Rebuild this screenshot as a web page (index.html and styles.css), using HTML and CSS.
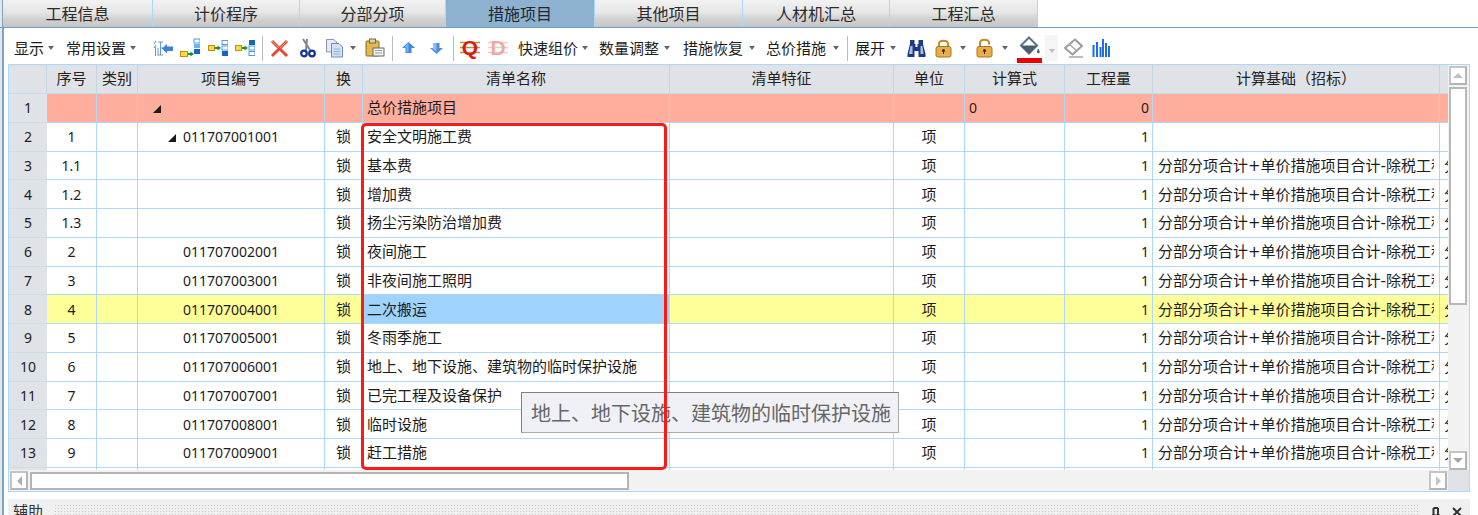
FILE: index.html
```html
<!DOCTYPE html>
<html lang="zh-CN">
<head>
    <meta charset="UTF-8">
    <title>措施项目</title>
    <link rel="stylesheet" href="styles.css">
</head>
<body>
<div class="app">
    <div class="tabs">
        <div class="tab w150">工程信息</div>
        <div class="tab w147">计价程序</div>
        <div class="tab w146">分部分项</div>
        <div class="tab w149 active">措施项目</div>
        <div class="tab w148">其他项目</div>
        <div class="tab w147">人材机汇总</div>
        <div class="tab w148">工程汇总</div>
    </div>

    <div class="toolbar">
        <span class="menu ml14">显示</span><i class="caret ml4"></i>
        <span class="menu ml12">常用设置</span><i class="caret ml4"></i>

        <!-- insert / move icons -->
        <svg class="ml17" width="20" height="20" viewBox="0 0 20 20"><path d="M3 3L1 6M3 7L1 10M2.500 9V18M5 4H10M7.500 4V17M5 10V17M4.500 17H10M8 10H10" fill="none" stroke="#5b9bd8" stroke-width="1"/><path d="M9 10.500L14 6V8.500H20V13H14V15.500Z" fill="#3f7fdc"/></svg>
        <svg class="ml7" width="20" height="20" viewBox="0 0 20 20"><rect x="14" y="1" width="6" height="4" fill="#fff" stroke="#4a9be8"/><rect x="14" y="6" width="6" height="4" fill="#6fb2f0"/><rect x="14" y="11" width="6" height="5" fill="#1566c4"/><rect x="0.500" y="13.500" width="7" height="5" fill="#f7dc45" stroke="#c98a1a"/><path d="M8 16H11" stroke="#1f8f2f" stroke-width="2"/><path d="M10.500 13.500L14 16L10.500 18.500Z" fill="#1f8f2f"/></svg>
        <svg class="ml8" width="20" height="20" viewBox="0 0 20 20"><rect x="14" y="2.500" width="6" height="4" fill="#fff" stroke="#4a9be8"/><rect x="14" y="8" width="6" height="4" fill="#fff" stroke="#4a9be8"/><rect x="14" y="13" width="6" height="5" fill="#1566c4"/><rect x="0.500" y="7.500" width="6" height="5" fill="#f7dc45" stroke="#c98a1a"/><path d="M7 10H10" stroke="#1f8f2f" stroke-width="2"/><path d="M9.500 7.500L13 10L9.500 12.500Z" fill="#1f8f2f"/></svg>
        <svg class="ml7" width="20" height="20" viewBox="0 0 20 20"><rect x="14" y="2" width="6" height="5" fill="#1566c4"/><rect x="14" y="8" width="6" height="4" fill="#fff" stroke="#4a9be8"/><rect x="14" y="13.500" width="6" height="4" fill="#fff" stroke="#4a9be8"/><rect x="0.500" y="7.500" width="6" height="5" fill="#f7dc45" stroke="#c98a1a"/><path d="M7 10H10" stroke="#1f8f2f" stroke-width="2"/><path d="M9.500 7.500L13 10L9.500 12.500Z" fill="#1f8f2f"/></svg>
        <i class="sep ml7"></i>

        <!-- delete, cut, copy, paste -->
        <svg class="ml7" width="19" height="20" viewBox="0 0 19 20"><path d="M2 3L17 18M17 3L2 18" stroke="#e8492f" stroke-width="3"/><path d="M2 3L9 10M17 3L10 10" stroke="#f49a86" stroke-width="1"/></svg>
        <svg class="ml11" width="16" height="20" viewBox="0 0 16 20"><path d="M3 1L10 12M7 1L6 12" stroke="#7d8590" stroke-width="2" fill="none"/><circle cx="4" cy="15.500" r="2.800" fill="none" stroke="#12329c" stroke-width="2.200"/><circle cx="12" cy="15.500" r="2.800" fill="none" stroke="#12329c" stroke-width="2.200"/></svg>
        <svg class="ml9" width="19" height="20" viewBox="0 0 19 20"><path d="M1.500 1.500H9L11.500 4V14H1.500Z" fill="#e8eaf4" stroke="#8c93b8"/><path d="M6.500 5.500H14L17.500 9V19H6.500Z" fill="#cfe3f7" stroke="#7c88b4"/><path d="M8.500 11H15M8.500 13.500H15M8.500 16H15" stroke="#8fb3da"/></svg>
        <i class="caret ml6"></i>
        <svg class="ml9" width="20" height="20" viewBox="0 0 20 20"><rect x="1" y="3" width="13" height="15" rx="1" fill="#e4b84a" stroke="#8e6a1e"/><rect x="4.500" y="1" width="6" height="4" fill="#d8d2b8" stroke="#7a6a3a"/><rect x="8" y="10" width="11" height="8" fill="#f4f4f4" stroke="#66686e"/><path d="M10 12.500H17M10 15H17" stroke="#9a9ca2"/></svg>
        <i class="sep ml7"></i>

        <!-- row up / down -->
        <svg class="ml9" width="13" height="20" viewBox="0 0 13 20"><path d="M6.500 4L13 10H9.500V15H3.500V10H0Z" fill="#3a86e0"/><path d="M6.500 5L2 9.500H4.500V14H6.500Z" fill="#7cb6f2"/></svg>
        <svg class="ml15" width="13" height="20" viewBox="0 0 13 20"><path d="M6.500 16L0 10H3.500V5H9.500V10H13Z" fill="#4a8ee0"/><path d="M3.500 5H6.500V14L2 10H4Z" fill="#8cbcf0"/></svg>
        <i class="sep ml10"></i>

        <!-- QD -->
        <svg class="ml6" width="20" height="22" viewBox="0 0 20 22"><path d="M0 5.500H20M0 10.500H20M0 15.500H20" stroke="#a8a030" stroke-width="1.500"/><text class="letter" x="10" y="18" fill="#e01818">Q</text></svg>
        <svg class="ml8 faded" width="20" height="22" viewBox="0 0 20 22"><path d="M0 5.500H20M0 10.500H20M0 15.500H20" stroke="#a8a030" stroke-width="1.500"/><text class="letter" x="10" y="18" fill="#e01818">D</text></svg>

        <span class="menu ml10">快速组价</span><i class="caret ml4"></i>
        <span class="menu ml11">数量调整</span><i class="caret ml5"></i>
        <span class="menu ml13">措施恢复</span><i class="caret ml6"></i>
        <span class="menu ml11">总价措施</span><i class="caret ml7"></i>
        <i class="sep ml8"></i>
        <span class="menu ml7">展开</span><i class="caret ml5"></i>

        <!-- find -->
        <svg class="ml11" width="19" height="20" viewBox="0 0 19 20"><path d="M3 2H7.500V6H8.500V9H10.500V6H11.500V2H16V6L18.500 16V19H11.500V13H7.500V19H0.500V16L3 6Z" fill="#1d3a86"/><path d="M3.500 8L2 16H5.500V8ZM13.500 8V16H16.500L15.500 8Z" fill="#a8c0ee"/></svg>

        <!-- locks -->
        <svg class="ml9" width="17" height="20" viewBox="0 0 17 20"><path d="M4 9V6C4 1.500 13 1.500 13 6V9" fill="none" stroke="#c58a22" stroke-width="2"/><rect x="1" y="8.500" width="15" height="10.500" rx="2" fill="#e9ad4a" stroke="#a87420"/><circle cx="8.500" cy="12.500" r="1.500" fill="#40280c"/><path d="M8 13H9V16H8Z" fill="#40280c"/></svg>
        <i class="caret ml8"></i>
        <svg class="ml10" width="17" height="20" viewBox="0 0 17 20"><path d="M4 9V5C4 0.500 13 0.500 13 5V6.500" fill="none" stroke="#c58a22" stroke-width="2"/><rect x="1" y="8.500" width="15" height="10.500" rx="2" fill="#e9ad4a" stroke="#a87420"/><circle cx="8.500" cy="12.500" r="1.500" fill="#40280c"/><path d="M8 13H9V16H8Z" fill="#40280c"/></svg>
        <i class="caret ml9"></i>

        <!-- fill colour -->
        <div class="fill ml9">
            <svg width="21" height="19" viewBox="0 0 21 19"><path d="M10 1.500L18 9.500L10 17.500L2 9.500Z" fill="#fff" stroke="#5f7186" stroke-width="2"/><path d="M1.500 9.500H18.500L10 18Z" fill="#4a5d74"/><path d="M19 12.500C20.800 15 21 16 20.300 17C19.300 17.900 17.800 17 18 15.500Z" fill="#4a5d74"/></svg>
            <i class="fill-bar"></i>
        </div>
        <div class="more ml3"><i class="caret light"></i></div>

        <svg class="ml5" width="20" height="20" viewBox="0 0 20 20"><path d="M12 1.500L19 8L9.500 16.500L2 10Z" fill="#fff" stroke="#9c9c9c" stroke-width="2" stroke-linejoin="round"/><path d="M6 6L13.500 12.500" stroke="#a6a6a6" stroke-width="1.500"/><path d="M6 19H20" stroke="#a6a6a6" stroke-width="1.500"/></svg>
        <svg class="ml9" width="18" height="20" viewBox="0 0 18 20"><path d="M1.500 7V19M5 4V19M8.500 9V19M11 1V19M14 5V19M17 8V19" stroke="#1a6ee6" stroke-width="2"/></svg>
    </div>

    <div class="frame">
        <div class="frame-top">
            <div class="grid-wrap">
                <table class="grid">
                    <colgroup>
                        <col class="c-no"><col class="c-seq"><col class="c-type"><col class="c-code"><col class="c-swap">
                        <col class="c-name"><col class="c-feat"><col class="c-unit"><col class="c-calc"><col class="c-qty">
                        <col class="c-base"><col class="c-more">
                    </colgroup>
                    <thead>
                        <tr>
                            <th></th><th>序号</th><th>类别</th><th>项目编号</th><th>换</th><th>清单名称</th>
                            <th>清单特征</th><th>单位</th><th>计算式</th><th>工程量</th><th>计算基础（招标）</th><th></th>
                        </tr>
                    </thead>
                    <tbody>
                        <tr class="total">
                            <td class="no">1</td><td></td><td></td><td class="lvl1"><i class="tree"></i></td><td></td>
                            <td>总价措施项目</td><td></td><td></td><td class="num">0</td><td class="num right">0</td><td></td><td></td>
                        </tr>
                        <tr>
                            <td class="no">2</td><td class="num mid">1</td><td></td><td class="lvl2 num"><i class="tree gap"></i>011707001001</td><td class="mid">锁</td>
                            <td>安全文明施工费</td><td></td><td class="mid">项</td><td></td><td class="num right">1</td><td></td><td></td>
                        </tr>
                        <tr>
                            <td class="no">3</td><td class="num mid">1.1</td><td></td><td></td><td class="mid">锁</td>
                            <td>基本费</td><td></td><td class="mid">项</td><td></td><td class="num right">1</td>
                            <td class="base"><div class="clip">分部分项合计+单价措施项目合计-除税工程</div></td><td>分部</td>
                        </tr>
                        <tr>
                            <td class="no">4</td><td class="num mid">1.2</td><td></td><td></td><td class="mid">锁</td>
                            <td>增加费</td><td></td><td class="mid">项</td><td></td><td class="num right">1</td>
                            <td class="base"><div class="clip">分部分项合计+单价措施项目合计-除税工程</div></td><td>分部</td>
                        </tr>
                        <tr>
                            <td class="no">5</td><td class="num mid">1.3</td><td></td><td></td><td class="mid">锁</td>
                            <td>扬尘污染防治增加费</td><td></td><td class="mid">项</td><td></td><td class="num right">1</td>
                            <td class="base"><div class="clip">分部分项合计+单价措施项目合计-除税工程</div></td><td>分部</td>
                        </tr>
                        <tr>
                            <td class="no">6</td><td class="num mid">2</td><td></td><td class="code num">011707002001</td><td class="mid">锁</td>
                            <td>夜间施工</td><td></td><td class="mid">项</td><td></td><td class="num right">1</td>
                            <td class="base"><div class="clip">分部分项合计+单价措施项目合计-除税工程</div></td><td>分部</td>
                        </tr>
                        <tr>
                            <td class="no">7</td><td class="num mid">3</td><td></td><td class="code num">011707003001</td><td class="mid">锁</td>
                            <td>非夜间施工照明</td><td></td><td class="mid">项</td><td></td><td class="num right">1</td>
                            <td class="base"><div class="clip">分部分项合计+单价措施项目合计-除税工程</div></td><td>分部</td>
                        </tr>
                        <tr class="current">
                            <td class="no">8</td><td class="num mid">4</td><td></td><td class="code num">011707004001</td><td class="mid">锁</td>
                            <td class="selected">二次搬运</td><td></td><td class="mid">项</td><td></td><td class="num right">1</td>
                            <td class="base"><div class="clip">分部分项合计+单价措施项目合计-除税工程</div></td><td>分部</td>
                        </tr>
                        <tr>
                            <td class="no">9</td><td class="num mid">5</td><td></td><td class="code num">011707005001</td><td class="mid">锁</td>
                            <td>冬雨季施工</td><td></td><td class="mid">项</td><td></td><td class="num right">1</td>
                            <td class="base"><div class="clip">分部分项合计+单价措施项目合计-除税工程</div></td><td>分部</td>
                        </tr>
                        <tr>
                            <td class="no">10</td><td class="num mid">6</td><td></td><td class="code num">011707006001</td><td class="mid">锁</td>
                            <td>地上、地下设施、建筑物的临时保护设施</td><td></td><td class="mid">项</td><td></td><td class="num right">1</td>
                            <td class="base"><div class="clip">分部分项合计+单价措施项目合计-除税工程</div></td><td>分部</td>
                        </tr>
                        <tr>
                            <td class="no">11</td><td class="num mid">7</td><td></td><td class="code num">011707007001</td><td class="mid">锁</td>
                            <td>已完工程及设备保护</td><td></td><td class="mid">项</td><td></td><td class="num right">1</td>
                            <td class="base"><div class="clip">分部分项合计+单价措施项目合计-除税工程</div></td><td>分部</td>
                        </tr>
                        <tr>
                            <td class="no">12</td><td class="num mid">8</td><td></td><td class="code num">011707008001</td><td class="mid">锁</td>
                            <td>临时设施</td><td></td><td class="mid">项</td><td></td><td class="num right">1</td>
                            <td class="base"><div class="clip">分部分项合计+单价措施项目合计-除税工程</div></td><td>分部</td>
                        </tr>
                        <tr>
                            <td class="no">13</td><td class="num mid">9</td><td></td><td class="code num">011707009001</td><td class="mid">锁</td>
                            <td>赶工措施</td><td></td><td class="mid">项</td><td></td><td class="num right">1</td>
                            <td class="base"><div class="clip">分部分项合计+单价措施项目合计-除税工程</div></td><td>分部</td>
                        </tr>
                        <tr>
                            <td class="no"></td><td></td><td></td><td></td><td></td><td></td><td></td><td></td><td></td><td></td><td></td><td></td>
                        </tr>
                    </tbody>
                </table>
            </div>
            <div class="vscroll">
                <div class="sbtn"><i class="tri up"></i></div>
                <div class="vthumb"></div>
                <div class="sbtn"><i class="tri down"></i></div>
            </div>
        </div>
        <div class="hscroll">
            <div class="sbtn"><i class="tri left"></i></div>
            <div class="hthumb"></div>
            <div class="sbtn end"><i class="tri right"></i></div>
            <div class="corner"></div>
        </div>
    </div>

    <div class="dock">
        <span class="dock-title">辅助</span>
        <div class="grip"></div>
        <svg class="dock-pin" width="10" height="10" viewBox="0 0 10 10"><path d="M2.500 1V8M7 1V8M1 8.500H9M2.500 1H7" fill="none" stroke="#333" stroke-width="2"/></svg>
        <svg class="dock-close" width="10" height="10" viewBox="0 0 10 10"><path d="M1 1L9 9M9 1L1 9" stroke="#333" stroke-width="2"/></svg>
    </div>

    <div class="tooltip">地上、地下设施、建筑物的临时保护设施</div>
    <div class="redbox"></div>
</div>
</body>
</html>
```

FILE: styles.css
```css
html, body {
    margin: 0;
    padding: 0;
    height: 100%;
    overflow: hidden;
    background: #fff;
}

body {
    font-family: "Noto Sans CJK SC", sans-serif;
    color: #1c1c1c;
}

.app {
    position: relative;
    height: 515px;
    overflow: hidden;
    background: linear-gradient(to right, #e6e6e6 2px, #7aa5c8 2px, #7aa5c8 4px, #fff 4px);
}

/* Tabs */
.tabs {
    display: flex;
    height: 27px;
    padding-left: 3px;
    border-bottom: 1px solid #6f9cbe;
    position: relative;
    background: #fff;
}

.tabs::before {
    content: "";
    width: 3px;
    margin-left: -3px;
    background: linear-gradient(to right, #e6e6e6 2px, #7aa5c8 2px);
}

.tab {
    box-sizing: border-box;
    border-right: 1px solid #aed6f5;
    background: linear-gradient(#f2f2f2, #e6e6e6 45%, #d2d2d2 70%, #c6c6c6);
    font-size: 16px;
    line-height: 26px;
    text-align: center;
    color: #2a2a2a;
}

.tab.active {
    background: #8eb1cf;
    color: #1c2530;
}

.w146 { width: 146px; }
.w147 { width: 147px; }
.w148 { width: 148px; }
.w149 { width: 149px; }
.w150 { width: 150px; }

/* Toolbar */
.toolbar {
    display: flex;
    align-items: center;
    height: 36px;
    padding-top: 4px;
    box-sizing: border-box;
}

.toolbar svg {
    flex: none;
    display: block;
}

.menu {
    font-size: 15px;
    line-height: 20px;
    white-space: nowrap;
}

.caret {
    flex: none;
    width: 0;
    height: 0;
    border-left: 3px solid transparent;
    border-right: 3px solid transparent;
    border-top: 4px solid #666;
}

.caret.light {
    border-top-color: #bdbdbd;
}

.sep {
    flex: none;
    width: 1px;
    height: 25px;
    background: #bcbcbc;
}

.letter {
    font-family: "Liberation Sans", sans-serif;
    font-size: 21px;
    font-weight: bold;
    text-anchor: middle;
}

.faded {
    opacity: 0.38;
}

.fill {
    width: 25px;
    height: 27px;
    flex: none;
    display: flex;
    flex-direction: column;
    align-items: center;
    margin-top: 2px;
}

.fill-bar {
    width: 25px;
    height: 5px;
    margin-top: 3px;
    background: #f00000;
}

.more {
    flex: none;
    width: 13px;
    height: 26px;
    background: #f5f5f5;
    display: flex;
    align-items: center;
    justify-content: center;
    padding-top: 5px;
    box-sizing: border-box;
}

.ml3 { margin-left: 3px; }
.ml4 { margin-left: 4px; }
.ml5 { margin-left: 5px; }
.ml6 { margin-left: 6px; }
.ml7 { margin-left: 7px; }
.ml8 { margin-left: 8px; }
.ml9 { margin-left: 9px; }
.ml10 { margin-left: 10px; }
.ml11 { margin-left: 11px; }
.ml12 { margin-left: 12px; }
.ml13 { margin-left: 13px; }
.ml14 { margin-left: 14px; }
.ml15 { margin-left: 15px; }
.ml17 { margin-left: 17px; }

/* Grid */
.frame {
    margin-left: 8px;
    width: 1462px;
    height: 428px;
    box-sizing: border-box;
    border: 1px solid #aed8f8;
    background: #f2f2f2;
    display: flex;
    flex-direction: column;
}

.frame-top {
    display: flex;
    height: 405px;
}

.grid-wrap {
    width: 1439px;
    height: 405px;
    overflow: hidden;
    background: #fff;
}

.grid {
    border-collapse: separate;
    border-spacing: 0;
    table-layout: fixed;
    width: 1531px;
    font-size: 15px;
}

.c-no { width: 38px; }
.c-seq { width: 50px; }
.c-type { width: 41px; }
.c-code { width: 187px; }
.c-swap { width: 38px; }
.c-name { width: 307px; }
.c-feat { width: 224px; }
.c-unit { width: 71px; }
.c-calc { width: 100px; }
.c-qty { width: 88px; }
.c-base { width: 287px; }
.c-more { width: 100px; }

.grid th {
    height: 29px;
    box-sizing: border-box;
    padding: 0 0 3px;
    background: #dfe2e7;
    border-right: 1px solid #c5d5e4;
    border-bottom: 1px solid #c5dcf0;
    font-weight: normal;
    text-align: center;
    color: #222;
}

.grid td {
    height: 28.75px;
    box-sizing: border-box;
    padding: 0 4px 2px;
    border-right: 1px solid #aed8f8;
    border-bottom: 1px solid #aed8f8;
    white-space: nowrap;
    overflow: hidden;
}

.grid td.no {
    padding: 0;
    background: #dfe2e7;
    border-right: none;
    border-bottom-color: #cfdbe6;
    text-align: center;
    font-family: "Noto Sans", sans-serif;
    font-size: 14px;
}

.grid td.num {
    font-family: "Noto Sans", sans-serif;
    font-size: 14px;
    padding-bottom: 0;
}

.grid td.mid {
    padding-left: 0;
    padding-right: 0;
    text-align: center;
}

.grid td.right {
    text-align: right;
    padding-right: 3px;
}

.grid td.code {
    padding-left: 45px;
}

.grid td.lvl1 {
    padding-left: 15px;
}

.grid td.lvl2 {
    padding-left: 30px;
}

.grid td.base {
    padding-left: 5px;
}

/* dejavu gives the + and - their wider look, cjk still comes from noto */
.clip {
    width: 276px;
    overflow: hidden;
    font-family: "DejaVu Sans", "Noto Sans CJK SC", sans-serif;
}

.tree {
    display: inline-block;
    width: 0;
    height: 0;
    border-left: 8px solid transparent;
    border-bottom: 8px solid #1a1a1a;
}

.tree.gap {
    margin-right: 7px;
}

.total td {
    background: #ffae9e;
}

.current td {
    background: #ffff99;
}

.current td.selected {
    background: #9fd3fd;
}

/* Scrollbars */
.sbtn {
    box-sizing: border-box;
    width: 18px;
    height: 19px;
    background: #fff;
    border: 2px solid #b4b4b4;
    border-top-color: #c4c4c4;
    border-left-color: #c4c4c4;
    display: flex;
    align-items: center;
    justify-content: center;
    flex: none;
}

.tri {
    width: 0;
    height: 0;
}

.tri.up {
    border-left: 5px solid transparent;
    border-right: 5px solid transparent;
    border-bottom: 5px solid #c0c0c0;
}

.tri.down {
    border-left: 5px solid transparent;
    border-right: 5px solid transparent;
    border-top: 5px solid #a8a8a8;
}

.tri.left {
    border-top: 5px solid transparent;
    border-bottom: 5px solid transparent;
    border-right: 5px solid #b0b0b0;
}

.tri.right {
    border-top: 5px solid transparent;
    border-bottom: 5px solid transparent;
    border-left: 5px solid #c4c4c4;
}

.vscroll {
    width: 21px;
    padding: 1px 0 0 1px;
    box-sizing: border-box;
    display: flex;
    flex-direction: column;
}

.vthumb {
    box-sizing: border-box;
    width: 18px;
    height: 218px;
    margin: 2px 0 auto;
    background: #fff;
    border: 2px solid #b8b8b8;
}

.hscroll {
    display: flex;
    height: 21px;
    padding-left: 1px;
    box-sizing: border-box;
    align-items: center;
}

.hthumb {
    box-sizing: border-box;
    width: 599px;
    height: 18px;
    margin-left: 2px;
    background: #fff;
    border: 2px solid #b4b4b4;
}

.sbtn.end {
    margin-left: auto;
}

.corner {
    width: 21px;
    height: 21px;
    background: #dfe2e7;
    flex: none;
    margin-left: 1px;
}

/* Docked panel */
.dock {
    display: flex;
    align-items: flex-start;
    margin: 7px 0 0 8px;
    width: 1462px;
    height: 30px;
    padding-top: 2px;
    box-sizing: border-box;
    background: #f0f0f0;
}

.dock-title {
    margin-left: 5px;
    font-size: 15px;
    line-height: 20px;
    color: #333;
}

.grip {
    flex: none;
    width: 1365px;
    height: 14px;
    margin: 3px 0 0 11px;
    background-image: radial-gradient(circle, #c4c4c4 0.7px, transparent 0.9px);
    background-size: 3px 3px;
}

.dock-pin {
    flex: none;
    margin: 6px 0 0 12px;
}

.dock-close {
    flex: none;
    margin: 6px 0 0 11px;
}

/* Tooltip and the red marker over the grid */
.tooltip {
    position: absolute;
    left: 521px;
    top: 392px;
    box-sizing: border-box;
    height: 41px;
    padding: 0 7px 0 9px;
    border: 1px solid #aaa;
    border-top-color: #808080;
    border-left-color: #808080;
    background: #f0f1f6;
    color: #666;
    font-size: 20px;
    line-height: 39px;
    white-space: nowrap;
}

.redbox {
    position: absolute;
    left: 361px;
    top: 123px;
    width: 306px;
    height: 347px;
    box-sizing: border-box;
    border: 3.500px solid #fb1a14;
    border-radius: 5px;
}
```
